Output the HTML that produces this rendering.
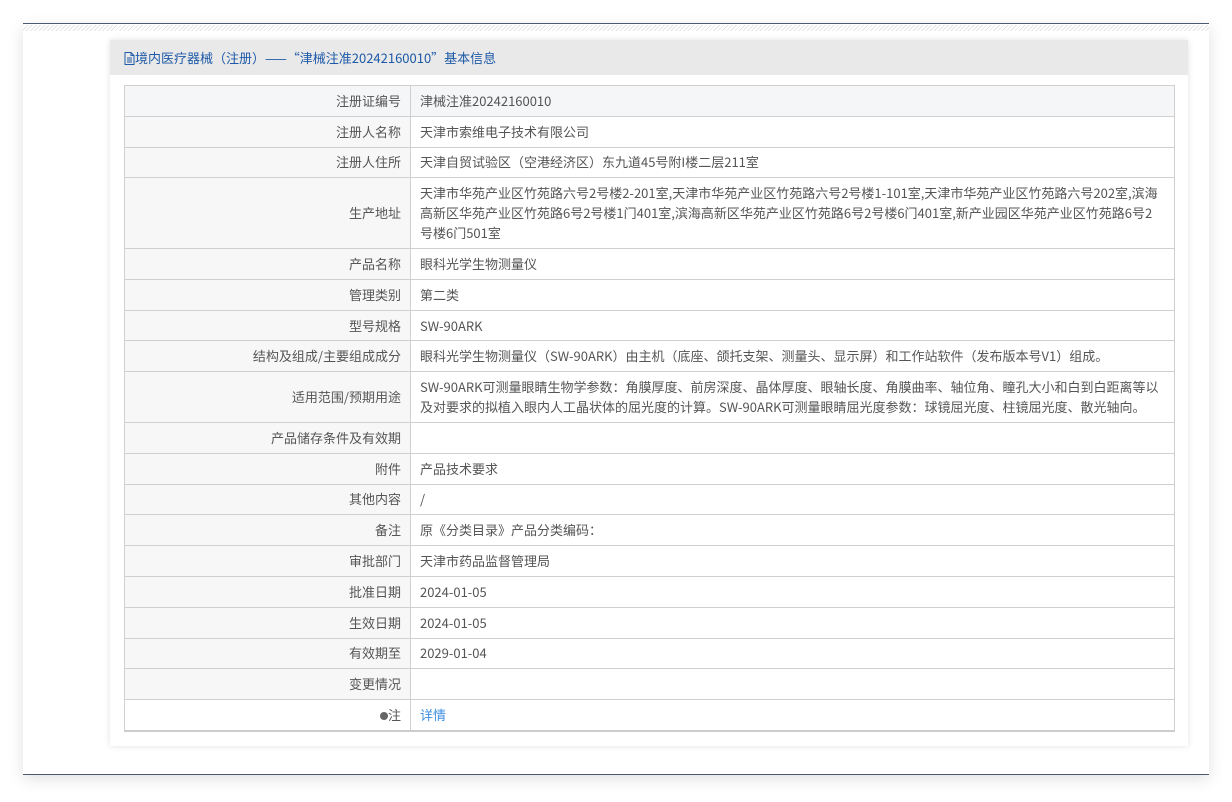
<!DOCTYPE html>
<html><head><meta charset="utf-8"><style>
body{margin:0;background:#fff;font-family:"Noto Sans CJK SC","Liberation Sans",sans-serif;font-size:13px;color:#555;}
.outer{position:absolute;left:23px;top:23px;width:1186px;height:750px;background:#fff;border-top:1px solid #4a5a72;border-bottom:1px solid #4a5a72;box-shadow:0 4px 14px rgba(0,0,0,.12);}
.hatch{position:absolute;left:0;right:0;top:1px;height:6px;background:repeating-linear-gradient(135deg,#e4e4e4 0 1px,#fff 1px 3px);}
.panel{position:absolute;left:87px;top:16px;width:1078px;height:706px;background:#fff;box-shadow:0 0 6px rgba(0,0,0,.12);}
.hd{height:35px;background:#e9e9e9;line-height:35px;padding-left:14px;color:#1e5aa8;font-size:13px;}
table{position:absolute;left:14px;top:45px;width:1051px;border-collapse:collapse;border:1px solid #ccc;border-bottom:2px solid #ccc;}
td{border:1px solid #d0d0d0;padding:4.9px 9px;line-height:20px;height:20px;vertical-align:middle;}
td.l{width:267px;text-align:right;background:#f7f7f7;}
tr.g td{background:#f5f6f8;}
a{color:#3d8fe0;text-decoration:none}
</style></head><body>
<div class="outer"><div class="hatch"></div>
<div class="panel">
<div class="hd"><svg width="11" height="13" viewBox="0 0 11 13" style="vertical-align:-2px"><path d="M1 .5h6l3 3v9H1z M7 .5v3h3 M3 6h5M3 8h5M3 10h5" fill="none" stroke="#1e5aa8"/></svg>境内医疗器械（注册）——“津械注准20242160010”基本信息</div>
<table>
<tr class="g"><td class="l">注册证编号</td><td>津械注准20242160010</td></tr>
<tr><td class="l">注册人名称</td><td>天津市索维电子技术有限公司</td></tr>
<tr><td class="l">注册人住所</td><td>天津自贸试验区（空港经济区）东九道45号附I楼二层211室</td></tr>
<tr><td class="l">生产地址</td><td>天津市华苑产业区竹苑路六号2号楼2-201室,天津市华苑产业区竹苑路六号2号楼1-101室,天津市华苑产业区竹苑路六号202室,滨海高新区华苑产业区竹苑路6号2号楼1门401室,滨海高新区华苑产业区竹苑路6号2号楼6门401室,新产业园区华苑产业区竹苑路6号2号楼6门501室</td></tr>
<tr><td class="l">产品名称</td><td>眼科光学生物测量仪</td></tr>
<tr><td class="l">管理类别</td><td>第二类</td></tr>
<tr><td class="l">型号规格</td><td>SW-90ARK</td></tr>
<tr><td class="l">结构及组成/主要组成成分</td><td>眼科光学生物测量仪（SW-90ARK）由主机（底座、颌托支架、测量头、显示屏）和工作站软件（发布版本号V1）组成。</td></tr>
<tr><td class="l">适用范围/预期用途</td><td>SW-90ARK可测量眼睛生物学参数：角膜厚度、前房深度、晶体厚度、眼轴长度、角膜曲率、轴位角、瞳孔大小和白到白距离等以及对要求的拟植入眼内人工晶状体的屈光度的计算。SW-90ARK可测量眼睛屈光度参数：球镜屈光度、柱镜屈光度、散光轴向。</td></tr>
<tr><td class="l">产品储存条件及有效期</td><td></td></tr>
<tr><td class="l">附件</td><td>产品技术要求</td></tr>
<tr><td class="l">其他内容</td><td>/</td></tr>
<tr><td class="l">备注</td><td>原《分类目录》产品分类编码：</td></tr>
<tr><td class="l">审批部门</td><td>天津市药品监督管理局</td></tr>
<tr><td class="l">批准日期</td><td>2024-01-05</td></tr>
<tr><td class="l">生效日期</td><td>2024-01-05</td></tr>
<tr><td class="l">有效期至</td><td>2029-01-04</td></tr>
<tr><td class="l">变更情况</td><td></td></tr>
<tr><td class="l" style="background:#fff"><span style="display:inline-block;width:8px;height:8px;border-radius:50%;background:#666;vertical-align:0"></span>注</td><td><a>详情</a></td></tr>
</table>
</div></div>
</body></html>
